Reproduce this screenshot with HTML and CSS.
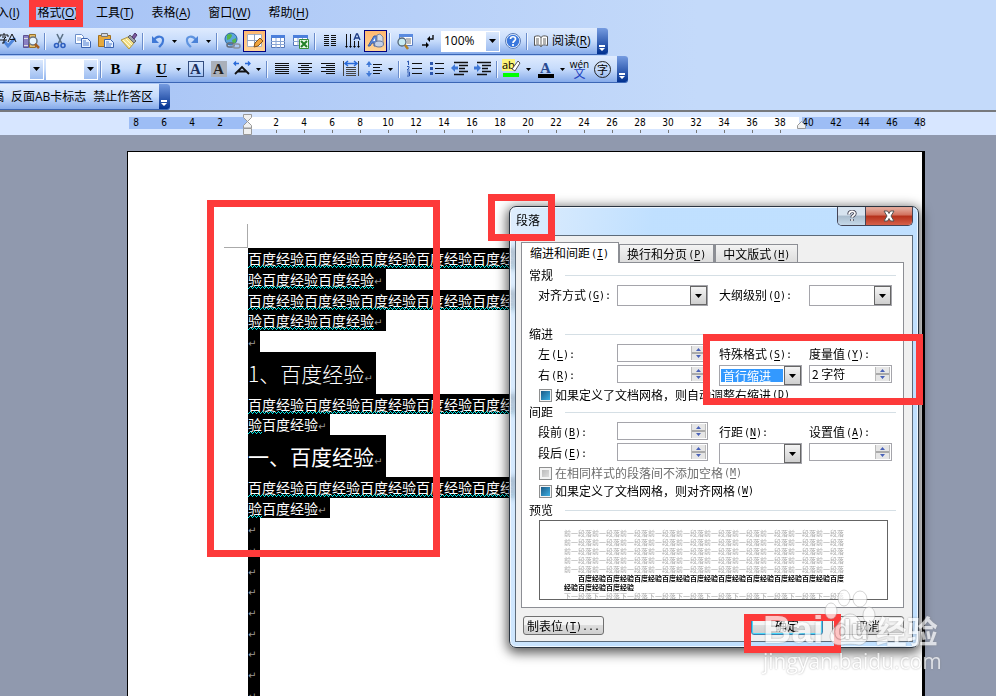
FILE: index.html
```html
<!DOCTYPE html>
<html lang="zh-CN">
<head>
<meta charset="utf-8">
<title>段落</title>
<link rel="stylesheet" href="styles.css">
</head>
<body>
<header class="chrome">
  <nav class="menu">
    <a href="#">插入(<u>I</u>)</a><a href="#">格式(<u>O</u>)</a><a href="#">工具(<u>T</u>)</a><a href="#">表格(<u>A</u>)</a><a href="#">窗口(<u>W</u>)</a><a href="#">帮助(<u>H</u>)</a>
  </nav>
  <div class="toolbar">
    <button class="tool" aria-label="拼写"><svg viewBox="0 0 18 18"><path d="M5 9l4 5 7-8" fill="none" stroke="#4f86dc" stroke-width="3"/><path d="M1 3h8M5 1v2M1 3v2M9 3v2M3 5h4L5 7v4H3M1 8h7" fill="none" stroke="#111"/><path d="M9 10l4-8 4 8M11 7.500h5" fill="none" stroke="#111"/></svg></button>
    <button class="tool" aria-label="信息检索"><svg viewBox="0 0 18 18"><path d="M1.500 3.500h5v12h-5z" fill="#8a80c4" stroke="#5d528f"/><path d="M2 6.500h4M2 13.500h4" stroke="#ddd"/><path d="M7.500 2.500h6v13h-6z" fill="#e8bf6a" stroke="#96702a"/><circle cx="11" cy="9" r="4" fill="#e6f3ff" stroke="#6a7480" stroke-width="1.500"/><path d="M13 12l4 4" stroke="#a45c22" stroke-width="2.500"/></svg></button>
    <i class="sep"></i>
    <button class="tool" aria-label="剪切"><svg viewBox="0 0 18 18"><path d="M6 2l5 10M12 2L7 12" stroke="#5c7186" stroke-width="1.600"/><circle cx="5.500" cy="13.500" r="2" fill="none" stroke="#2f5fbf" stroke-width="1.600"/><circle cx="12" cy="13.500" r="2" fill="none" stroke="#2f5fbf" stroke-width="1.600"/></svg></button>
    <button class="tool" aria-label="复制"><svg viewBox="0 0 18 18"><path d="M1.500 2.500h6l2 2v7h-8z" fill="#fff" stroke="#6c8fc8"/><path d="M3 6h4M3 8h4" stroke="#7aa0dc"/><path d="M7.500 6.500h6l3 3v6h-9z" fill="#e9f2ff" stroke="#3a63b0"/><path d="M9 9h3M9 11h6M9 13h6" stroke="#4f7ed0"/></svg></button>
    <button class="tool" aria-label="粘贴"><svg viewBox="0 0 18 18"><path d="M1.500 3.500h12v11h-12z" fill="#e7a93c" stroke="#a36f1c"/><path d="M4.500 1.500h6v3h-6z" fill="#d5d8de" stroke="#777"/><path d="M7.500 7.500h6l3 3v5h-9z" fill="#e9f2ff" stroke="#3a63b0"/><path d="M9 10h3M9 12h6M9 14h5" stroke="#4f7ed0"/></svg></button>
    <button class="tool" aria-label="格式刷"><svg viewBox="0 0 18 18"><path d="M1 8l7-3 6 6-5 6z" fill="#f3e08a" stroke="#b39a44"/><path d="M3 8l7 7M6 7l6 6" stroke="#fffbd8"/><path d="M8 5l2-2 6 6-2 2z" fill="#9aa0a8" stroke="#666"/><path d="M12 5l3-4 2 2-3 4z" fill="#7b5aa0" stroke="#50386e"/></svg></button>
    <i class="sep"></i>
    <button class="tool" aria-label="撤消"><svg viewBox="0 0 18 18"><path d="M5 8c3-5 10-4 9 1 0 3-2 4-4 6" fill="none" stroke="#3f78d6" stroke-width="2.200"/><path d="M3 4v7h7z" fill="#3f78d6"/></svg></button><button class="drop" aria-label="撤消列表"><svg viewBox="0 0 5 3"><path d="M0 0h5L2.500 3z"/></svg></button>
    <button class="tool" aria-label="恢复"><svg viewBox="0 0 18 18"><path d="M13 8C10 3 3 4 4 9c0 3 2 4 4 6" fill="none" stroke="#5f94e0" stroke-width="2.200"/><path d="M15 4v7H8z" fill="#4a82d8"/></svg></button><button class="drop" aria-label="恢复列表"><svg viewBox="0 0 5 3"><path d="M0 0h5L2.500 3z"/></svg></button>
    <i class="sep"></i>
    <button class="tool" aria-label="超链接"><svg viewBox="0 0 18 18"><circle cx="8" cy="7" r="6" fill="#5ba4dc" stroke="#28659e"/><path d="M4 3c3-2 5-1 5 1L7 7 4 8zM9 8l4-2v4l-3 2z" fill="#54b64c"/><rect x="4" y="11" width="7" height="4" rx="2" fill="none" stroke="#626b78" stroke-width="1.500"/><rect x="10" y="12" width="7" height="4" rx="2" fill="none" stroke="#8a929e" stroke-width="1.500"/></svg></button>
    <button class="tool on" aria-label="表格和边框"><svg viewBox="0 0 18 18"><path d="M1.500 2.500h14v12h-14z" fill="#fff" stroke="#a5b0c4"/><path d="M8.500 2v12M1 8.500h14" stroke="#8fa0bd"/><path d="M8 15l1-4 5-5 3 3-5 5z" fill="#f0a43c" stroke="#875319"/></svg></button>
    <button class="tool" aria-label="插入表格"><svg viewBox="0 0 18 18"><path d="M2.500 3.500h13v12h-13z" fill="#fff" stroke="#5577b8"/><path d="M2 3h14v3H2z" fill="#4b7fdb"/><path d="M2 9.500h14M2 12.500h14M7 6v10M11.500 6v10" stroke="#89a5d4"/></svg></button>
    <button class="tool" aria-label="插入Excel"><svg viewBox="0 0 18 18"><path d="M1.500 3.500h14v10h-14z" fill="#fff" stroke="#5577b8"/><path d="M1 3h15v3H1z" fill="#4b7fdb"/><path d="M1 9.500h14M6 6v8M10.500 6v8" stroke="#89a5d4"/><path d="M7.500 7.500h9v9h-9z" fill="#eaf7e8" stroke="#388c3c"/><path d="M9 9l6 6M15 9l-6 6" stroke="#238028" stroke-width="2"/></svg></button>
    <i class="sep"></i>
    <button class="tool" aria-label="分栏"><svg viewBox="0 0 18 18"><path d="M3 3.500h5M3 5.500h5M3 7.500h5M3 9.500h5M3 11.500h5M3 13.500h5M10 3.500h5M10 5.500h5M10 7.500h5M10 9.500h5M10 11.500h5M10 13.500h5" stroke="#111"/></svg></button>
    <button class="tool" aria-label="文字方向"><svg viewBox="0 0 18 18"><path d="M2.500 2v13M6.500 2v13M10.500 9v6M14.500 9v6" stroke="#111"/><path d="M1 14l1.500 2L4 14zM5 14l1.500 2L8 14zM9 14l1.500 2 1.500-2zM13 14l1.500 2 1.500-2z"/><path d="M10 8l2.500-6h1L16 8M11 6h4" fill="none" stroke="#1c3b84" stroke-width="1.300"/></svg></button>
    <button class="tool on" aria-label="绘图"><svg viewBox="0 0 18 18"><path d="M1 14L7 4h3v10H7v-3H5l-2 3z" fill="#5b87da" stroke="#3a5ca6"/><path d="M6 9h2V6z" fill="#fff"/><path d="M10 3l3-1 3 3v6l-3 3-3-3z" fill="#d5dae2" stroke="#8088a0"/><ellipse cx="12" cy="12" rx="4.500" ry="3" fill="#c2cfe8" stroke="#66769c"/></svg></button>
    <i class="sep"></i>
    <button class="tool" aria-label="文档结构图"><svg viewBox="0 0 18 18"><path d="M3.500 2.500h13v11h-13z" fill="#fff" stroke="#5b80c4"/><path d="M3 2h14v3H3z" fill="#5a8be0"/><path d="M10 7h5M11 9h4M11 11h4" stroke="#777"/><circle cx="6" cy="10" r="4" fill="#c9ecf4" stroke="#567" stroke-width="1.300"/><path d="M9 13l3 4" stroke="#b58124" stroke-width="2.500"/></svg></button>
    <button class="tool" aria-label="显示标记"><svg viewBox="0 0 18 18"><path d="M14 3v4H9M3 13h6" fill="none" stroke="#111" stroke-width="1.400"/><path d="M11 4v6L8 7zM7 10v6l3-3z"/></svg></button>
    <select class="combo zoomer" aria-label="显示比例"><option>100%</option></select>
    <button class="tool" aria-label="帮助"><svg viewBox="0 0 18 18"><circle cx="9" cy="9" r="7" fill="#3b78dd" stroke="#e9f2ff" stroke-width="1.500"/><circle cx="9" cy="9" r="7.500" fill="none" stroke="#5a7cb8"/><path d="M6.500 7c0-3 5-3 5 0 0 2-2.500 2-2.500 4M9 12v2" fill="none" stroke="#fff" stroke-width="1.700"/></svg></button>
    <i class="sep"></i>
    <button class="read"><svg viewBox="0 0 16 16"><path d="M1.500 3.500c3-1 5-1 6.500 1 1.500-2 3.500-2 6.500-1v9c-3-1-5-1-6.500 1-1.500-2-3.500-2-6.500-1z" fill="#fff" stroke="#555"/><path d="M8 4v10M3 6h3M3 8h3M3 10h3M10 6h3M10 8h3M10 10h3" stroke="#666"/></svg><span>阅读(<u>R</u>)</span></button>
    <button class="cap" aria-label="工具栏选项"><svg viewBox="0 0 7 7"><path d="M0 0h6v2H0zM0 3h6L3 6z"/></svg></button>
  </div>
  <div class="toolbar">
    <select class="combo style" aria-label="字体"><option></option></select>
    <select class="combo size" aria-label="字号"><option></option></select>
    <i class="sep"></i>
    <button class="tool glyph"><b>B</b></button><button class="tool glyph"><em>I</em></button><button class="tool glyph"><u>U</u></button><button class="drop" aria-label="下划线"><svg viewBox="0 0 5 3"><path d="M0 0h5L2.500 3z"/></svg></button>
    <button class="tool glyph"><span class="boxed">A</span></button><button class="tool glyph"><span class="shaded">A</span></button>
    <button class="tool" aria-label="字符缩放"><svg viewBox="0 0 18 18"><path d="M2 14l7-7 7 7M5 11.500h8" fill="none" stroke="#111" stroke-width="1.800"/><path d="M1 3.500h5M12 3.500h5M3 1.500l-2 2 2 2M15 1.500l2 2-2 2" fill="none" stroke="#2869d8" stroke-width="1.300"/></svg></button><button class="drop" aria-label="缩放"><svg viewBox="0 0 5 3"><path d="M0 0h5L2.500 3z"/></svg></button>
    <i class="sep"></i>
    <button class="tool" aria-label="两端对齐"><svg viewBox="0 0 18 18"><path d="M2 3.500h14M2 5.500h14M2 7.500h14M2 9.500h14M2 11.500h14M2 13.500h14" stroke="#111"/></svg></button>
    <button class="tool" aria-label="居中"><svg viewBox="0 0 18 18"><path d="M2 3.500h14M5 5.500h8M2 7.500h14M5 9.500h8M2 11.500h14M5 13.500h8" stroke="#111"/></svg></button>
    <button class="tool" aria-label="右对齐"><svg viewBox="0 0 18 18"><path d="M2 3.500h14M7 5.500h9M2 7.500h14M7 9.500h9M2 11.500h14M7 13.500h9" stroke="#111"/></svg></button>
    <button class="tool" aria-label="分散对齐"><svg viewBox="0 0 18 18"><path d="M1.500 1v15M16.500 1v15M4 7.500h10M4 9.500h10M4 11.500h10M4 13.500h10M4 15.500h10" stroke="#444"/><path d="M3 3.500h12M6 1L3 3.500 6 6M12 1l3 2.500L12 6" fill="none" stroke="#2869d8" stroke-width="1.500"/></svg></button>
    <button class="tool" aria-label="行距"><svg viewBox="0 0 18 18"><path d="M8 4.500h9M8 7.500h7M8 10.500h9M8 13.500h7" stroke="#111"/><path d="M4 3v4M4 11v4" stroke="#3f78d6" stroke-width="1.500"/><path d="M1 5l3-4 3 4zM1 13l3 4 3-4z" fill="#3f78d6"/></svg></button><button class="drop" aria-label="行距列表"><svg viewBox="0 0 5 3"><path d="M0 0h5L2.500 3z"/></svg></button>
    <i class="sep"></i>
    <button class="tool" aria-label="编号"><svg viewBox="0 0 18 18"><path d="M7 3.500h10M7 8.500h10M7 13.500h10" stroke="#111"/><path d="M2 2l1.500-1v4M2 6.500h2V8L2 10h2.500M2 12h2.500v4H2M2.500 14h2" fill="none" stroke="#2c56ae"/></svg></button>
    <button class="tool" aria-label="项目符号"><svg viewBox="0 0 18 18"><path d="M7 3.500h9M7 8.500h9M7 13.500h9" stroke="#111"/><path d="M2 2h3v3H2zM2 7h3v3H2zM2 12h3v3H2z" fill="#2c56ae"/></svg></button>
    <button class="tool" aria-label="减少缩进"><svg viewBox="0 0 18 18"><path d="M3 2.500h14M8 5.500h9M8 8.500h6M8 11.500h9M3 14.500h10" stroke="#111" stroke-width="1.600"/><path d="M0 8l4-4v2.500h3v3H4V12z" fill="#3f78d6"/></svg></button>
    <button class="tool" aria-label="增加缩进"><svg viewBox="0 0 18 18"><path d="M3 2.500h14M8 5.500h9M8 8.500h6M8 11.500h9M3 14.500h10" stroke="#111" stroke-width="1.600"/><path d="M7 8L3 4v2.500H0v3h3V12z" fill="#3f78d6"/></svg></button>
    <i class="sep"></i>
    <button class="tool glyph hl"><span class="ab">ab</span><svg viewBox="0 0 18 18"><path d="M9 9l6-8 2 2-5 8z" fill="#fff" stroke="#555"/><path d="M0 13h16v4H0z" fill="#0f0"/></svg></button><button class="drop" aria-label="突出显示"><svg viewBox="0 0 5 3"><path d="M0 0h5L2.500 3z"/></svg></button>
    <button class="tool glyph"><span class="inked">A</span></button><button class="drop" aria-label="字体颜色"><svg viewBox="0 0 5 3"><path d="M0 0h5L2.500 3z"/></svg></button>
    <button class="tool glyph pin"><span>wén</span><b>文</b></button>
    <button class="tool glyph"><span class="ring">字</span></button>
    <button class="cap" aria-label="工具栏选项"><svg viewBox="0 0 7 7"><path d="M0 0h6v2H0zM0 3h6L3 6z"/></svg></button>
  </div>
  <div class="toolbar words">
    <button>稿</button><button>反面AB卡标志</button><button>禁止作答区</button>
    <button class="cap" aria-label="工具栏选项"><svg viewBox="0 0 7 7"><path d="M0 0h6v2H0zM0 3h6L3 6z"/></svg></button>
  </div>
</header>
<div class="ruler">
  <span>8</span><span>6</span><span>4</span><span>2</span><span class="origin"><svg viewBox="0 0 9 21"><path d="M.5.500h8v3l-4 4-4-4zM.5 14V11.500l4-4 4 4V14zM.5 14.500h8v6h-8z" fill="#f0f0f0" stroke="#999"/></svg></span><span class="t">2</span><span class="t">4</span><span class="t">6</span><span class="t">8</span><span class="t">10</span><span class="t">12</span><span class="t">14</span><span class="t">16</span><span class="t">18</span><span class="t">20</span><span class="t">22</span><span class="t">24</span><span class="t">26</span><span class="t">28</span><span class="t">30</span><span class="t">32</span><span class="t">34</span><span class="t">36</span><span class="t">38</span><span class="limit">40<svg viewBox="0 0 9 8"><path d="M.5 7.500v-3l4-4 4 4v3z" fill="#f0f0f0" stroke="#999"/></svg></span><span>42</span><span>44</span><span>46</span><span>48</span>
</div>
<main class="desk">
  <article class="page">
    <div class="corner"></div>
    <p><span class="sel"><span class="wave">百度经验百度经验百度经验百度经验百度经验百度经验百度经验百度经验百度经验百度经</span></span></p>
    <p><span class="sel"><span class="wave">验百度经验百度经验</span><i>↵</i></span></p>
    <p><span class="sel"><span class="wave">百度经验百度经验百度经验百度经验百度经验百度经验百度经验百度经验百度经验百度经</span></span></p>
    <p><span class="sel"><span class="wave">验百度经验百度经验</span><i>↵</i></span></p>
    <p><span class="sel"><i>↵</i></span></p>
    <h2 class="thin"><span class="sel">1、百度经验<i>↵</i></span></h2>
    <p><span class="sel"><span class="wave">百度经验百度经验百度经验百度经验百度经验百度经验百度经验百度经验百度经验百度经</span></span></p>
    <p><span class="sel"><span class="wave">验</span>百度经验<i>↵</i></span></p>
    <h2><span class="sel">一、百度经验<i>↵</i></span></h2>
    <p><span class="sel"><span class="wave">百度经验百度经验百度经验百度经验百度经验百度经验百度经验百度经验百度经验百度经</span></span></p>
    <p><span class="sel"><span class="wave">验</span>百度经验<i>↵</i></span></p>
    <p><span class="sel"><i>↵</i></span></p><p><span class="sel"><i>↵</i></span></p><p><span class="sel"><i>↵</i></span></p>
    <p><span class="sel"><i>↵</i></span></p><p><span class="sel"><i>↵</i></span></p><p><span class="sel"><i>↵</i></span></p>
    <p><span class="sel"><i>↵</i></span></p><p><span class="sel"><i>↵</i></span></p><p><span class="sel"><i>↵</i></span></p>
  </article>
</main>

<section class="dialog" role="dialog" aria-labelledby="dlg-title">
  <div class="titlebar">
    <h1 id="dlg-title">段落</h1>
    <div class="winbtns"><button class="help" aria-label="帮助"><svg viewBox="0 0 12 12"><path d="M3 4.500c0-4 6-4 6-1 0 2-3 2-3 4M6 9v2" fill="none" stroke="#445" stroke-width="3.400"/><path d="M3 4.500c0-4 6-4 6-1 0 2-3 2-3 4M6 9v2" fill="none" stroke="#fff" stroke-width="1.600"/></svg></button><button class="close" aria-label="关闭"><svg viewBox="0 0 12 12"><path d="M1 1h3.500L6 3.500 7.500 1H11L8 6l3 5H7.500L6 8.500 4.500 11H1l3-5z" fill="#fff" stroke="#555"/></svg></button></div>
  </div>
  <form class="client">
    <div class="tabs"><button type="button" class="tab current">缩进和间距<kbd>(<u>I</u>)</kbd></button><button type="button" class="tab">换行和分页<kbd>(<u>P</u>)</kbd></button><button type="button" class="tab">中文版式<kbd>(<u>H</u>)</kbd></button></div>
    <div class="pane">
      <h3>常规</h3>
      <div class="fields">
        <label for="align">对齐方式<kbd>(<u>G</u>):</kbd></label><select id="align"><option></option></select>
        <label for="level">大纲级别<kbd>(<u>O</u>):</kbd></label><select id="level" class="last"><option></option></select>
      </div>
      <h3 class="apart">缩进</h3>
      <div class="fields">
        <label for="left">左<kbd>(<u>L</u>):</kbd></label><span class="spin"><input id="left"><i></i></span>
        <label for="special">特殊格式<kbd>(<u>S</u>):</kbd></label><label for="by" class="last">度量值<kbd>(<u>Y</u>):</kbd></label>
        <label for="right">右<kbd>(<u>R</u>):</kbd></label><span class="spin"><input id="right"><i></i></span>
        <select id="special" class="picked"><option>首行缩进</option></select><span class="spin last"><input id="by" value="2 字符"><i></i></span>
      </div>
      <label class="check"><input type="checkbox" class="mixed">如果定义了文档网格，则自动调整右缩进<kbd>(<u>D</u>)</kbd></label>
      <h3>间距</h3>
      <div class="fields">
        <label for="before">段前<kbd>(<u>B</u>):</kbd></label><span class="spin"><input id="before"><i></i></span>
        <label for="spacing">行距<kbd>(<u>N</u>):</kbd></label><label for="at" class="last">设置值<kbd>(<u>A</u>):</kbd></label>
        <label for="after">段后<kbd>(<u>E</u>):</kbd></label><span class="spin"><input id="after"><i></i></span>
        <select id="spacing"><option></option></select><span class="spin last"><input id="at"><i></i></span>
      </div>
      <label class="check off"><input type="checkbox" disabled>在相同样式的段落间不添加空格<kbd>(<u>M</u>)</kbd></label>
      <label class="check"><input type="checkbox" class="mixed">如果定义了文档网格，则对齐网格<kbd>(<u>W</u>)</kbd></label>
      <h3 class="near">预览</h3>
      <div class="preview">
        <p>前一段落前一段落前一段落前一段落前一段落前一段落前一段落前一段落前一段落前一段落</p>
        <p>前一段落前一段落前一段落前一段落前一段落前一段落前一段落前一段落前一段落前一段落</p>
        <p>前一段落前一段落前一段落前一段落前一段落前一段落前一段落前一段落前一段落前一段落</p>
        <p>前一段落前一段落前一段落前一段落前一段落前一段落前一段落前一段落前一段落前一段落</p>
        <p>前一段落前一段落前一段落前一段落前一段落前一段落前一段落前一段落前一段落前一段落</p>
        <p class="body">百度经验百度经验百度经验百度经验百度经验百度经验百度经验百度经验百度经验百度<br>经验百度经验百度经验</p>
        <p>下一段落下一段落下一段落下一段落下一段落下一段落下一段落下一段落下一段落下一段落</p>
      </div>
    </div>
    <div class="actions"><button type="button" class="tabstop">制表位<kbd>(<u>T</u>)...</kbd></button><button type="button" class="ok">确定</button><button type="button">取消</button></div>
  </form>
</section>

<div class="mark m-menu"></div>
<div class="mark m-text"></div>
<div class="mark m-title"></div>
<div class="mark m-special"></div>
<div class="mark m-ok"></div>

<div class="watermark">
  <div class="brand"><span>Bai</span><svg viewBox="0 0 52 58"><g fill="#fff" stroke="#999" stroke-opacity=".6"><ellipse cx="7" cy="22" rx="6" ry="8"/><ellipse cx="20" cy="9" rx="6" ry="8"/><ellipse cx="36" cy="10" rx="7" ry="8"/><ellipse cx="45" cy="26" rx="6" ry="8"/><path d="M26 25c8 0 9 7 14 12 7 7 4 19-5 19-6-1-12-1-18 0C7 57 2 47 10 39c7-6 8-14 16-14z"/></g></svg><span class="du">du</span><span class="cn">经验</span></div>
  <div class="site">jingyan.baidu.com</div>
</div>
</body>
</html>
```
FILE: styles.css
```css
* { box-sizing: border-box; }
body {
  margin: 0;
  height: 100vh;
  overflow: hidden;
  position: relative;
  display: flex;
  flex-direction: column;
  font: 12px/16px "Open Sans", "Noto Sans CJK SC", sans-serif;
  color: #000;
  background: #9099ae;
}
button, select, input { font: inherit; color: inherit; margin: 0; padding: 0; border: 0; background: none; border-radius: 0; outline: 0; }
p, h1, h2, h3 { margin: 0; font-weight: normal; }
u { text-underline-offset: 2px; }

/* menu and toolbars */
.chrome {
  flex: none;
  height: 112px;
  overflow: hidden;
  background: linear-gradient(90deg, #a4c1f5, #c4dafa 70%);
  border-bottom: 2px solid #77797d;
}
.menu { display: flex; gap: 18px; height: 28px; margin-left: -15px; padding-top: 5px; }
.menu a { color: #000; text-decoration: none; white-space: nowrap; }
.toolbar {
  display: flex;
  align-items: center;
  width: max-content;
  height: 27px;
  margin: 0 0 1px -4px;
  border-bottom: 1px solid #3b66b5;
  border-radius: 0 3px 3px 0;
  background: linear-gradient(#dfebfe, #c6dbfb 50%, #86abea);
}
.tool { width: 23px; height: 22px; display: grid; place-items: center; flex: none; }
.tool svg { width: 18px; height: 18px; }
.tool.on { background: linear-gradient(#ffb870, #ffd497); border: 1px solid #000080; }
.sep { width: 2px; height: 17px; margin: 0 2px; border-left: 1px solid #6a8ccb; border-right: 1px solid #f1f7ff; }
.drop { width: 11px; height: 22px; display: grid; place-items: center; }
.drop svg { width: 5px; height: 3px; }
.cap {
  width: 11px;
  align-self: stretch;
  margin-left: 3px;
  padding-bottom: 2px;
  display: flex;
  align-items: flex-end;
  justify-content: center;
  background: linear-gradient(#759be0, #3c66b8 50%, #00308f);
  border-radius: 0 3px 3px 0;
}
.cap svg { width: 7px; height: 7px; fill: #fff; }
.combo {
  appearance: none;
  height: 21px;
  border: 1px solid #fff;
  background:
    url("data:image/svg+xml,%3Csvg xmlns='http://www.w3.org/2000/svg' width='7' height='4'%3E%3Cpath d='M0 0h7L3.500 4z'/%3E%3C/svg%3E") right 3px center no-repeat,
    linear-gradient(#dce9fd, #9dbdf1) right / 13px 100% no-repeat,
    #fff;
}
.style { width: 48px; margin-right: 2px; }
.size { width: 52px; }
.zoomer { width: 59px; margin: 0 1px 0 2px; padding-left: 2px; }
.read { display: flex; align-items: center; gap: 3px; padding: 0 3px; }
.read svg { width: 16px; height: 16px; }
.words { gap: 7px; height: 26px; margin-left: -8px; }
.words .cap { margin-left: -1px; }

.glyph { font: bold 15px/18px "Liberation Serif", serif; }
.boxed, .shaded { width: 16px; height: 16px; line-height: 16px; color: #1c2f5c; }
.boxed { border: 1px solid #334d80; line-height: 14px; }
.shaded { background: #aab0ba; color: #222; }
.inked { width: 16px; height: 17px; line-height: 14px; color: #274a91; border-bottom: 4px solid #000; }
.hl { position: relative; }
.ab { position: absolute; left: 2px; top: 1px; font: 11px/12px "Open Sans", sans-serif; background: #fdf57a; }
.hl svg { position: relative; }
.pin { font: 12px/10px "Noto Sans CJK SC", sans-serif; align-content: center; }
.pin span { font: 10px/7px "Open Sans", sans-serif; }
.pin b { font-weight: normal; color: #2142c0; }
.ring { width: 17px; height: 17px; border: 1px solid #222; border-radius: 50%; font: 11px/14px "Noto Sans CJK SC", sans-serif; }

/* ruler */
.ruler {
  flex: none;
  display: flex;
  height: 23px;
  padding: 5px 0 0 122px;
  overflow: hidden;
  font: 10px/12px "DejaVu Sans Condensed", "DejaVu Sans", sans-serif;
  background:
    linear-gradient(90deg, #9dbdf5 118px, #fff 118px 670px, #d7e6ff 670px 673px, #9dbdf5 673px) 129px 5px / 792px 12px no-repeat,
    #d7e6ff;
}
.ruler span { width: 28px; flex: none; text-align: center; position: relative; }
.ruler .t { background: linear-gradient(#777, #777) center 13px / 1px 3px no-repeat; }
.origin svg { position: absolute; left: 9px; top: -3px; width: 9px; height: 21px; }
.limit svg { position: absolute; left: 3px; top: 4px; width: 9px; height: 8px; }

/* document */
.desk { flex: 1; min-height: 0; padding: 16px 71px 0 127px; overflow: hidden; }
.page {
  min-height: 100%;
  padding: 72px 0 0 120px;
  border: solid #000;
  border-width: 1px 3px 0 1px;
  background: #fff;
  font-family: "Noto Sans CJK SC", sans-serif;
  color: #fff;
  overflow: hidden;
}
.corner { width: 24px; height: 24px; margin-left: -24px; border: solid #aaa; border-width: 0 1px 1px 0; }
.page p { height: 21px; font-size: 14px; line-height: 21px; white-space: nowrap; }
.page p:nth-of-type(3n) { height: 20px; }
.page h2 { height: 42px; font-size: 21px; line-height: 42px; white-space: nowrap; }
.page .thin { font-weight: 300; }
.sel { display: inline-block; height: 100%; background: #000; vertical-align: top; }
.sel i { display: inline-block; width: 12px; font: 10px/12px "DejaVu Sans", sans-serif; color: #999; }
.wave {
  display: inline-block;
  height: 20px;
  background: url("data:image/svg+xml,%3Csvg xmlns='http://www.w3.org/2000/svg' width='4' height='3'%3E%3Cpath d='M0 2h1v1H0zM1 1h1v1H1zM2 0h1v1H2zM3 1h1v1H3z' fill='%230ee'/%3E%3C/svg%3E") left bottom repeat-x;
  vertical-align: top;
}

/* dialog */
.dialog {
  position: absolute;
  left: 509px;
  top: 206px;
  width: 410px;
  padding: 0 5px 5px;
  border: 1px solid #2a3440;
  border-radius: 7px;
  background: linear-gradient(100deg, rgba(215, 233, 252, .8), rgba(176, 216, 255, .8) 30%, rgba(176, 216, 255, .8));
  backdrop-filter: blur(3px);
  box-shadow: inset 0 0 0 1px rgba(255, 255, 255, .7), 0 3px 12px 2px rgba(0, 0, 0, .65);
  font-family: "Noto Sans CJK SC", sans-serif;
}
.titlebar { display: flex; justify-content: space-between; height: 28px; }
.titlebar h1 { font-size: 12px; line-height: 26px; padding-left: 1px; }
.winbtns { display: flex; height: 19px; border: 1px solid #445; border-top: 0; border-radius: 0 0 5px 5px; overflow: hidden; }
.winbtns button { display: grid; place-items: center; }
.winbtns svg { width: 12px; height: 12px; }
.help { width: 27px; background: linear-gradient(#d7e3ef 45%, #a9bccd 50%, #c5d8e8); }
.winbtns .close { width: 47px; border-left: 1px solid #445; background: linear-gradient(#e3a697 10%, #d1705c 45%, #b5301a 50%, #d6614a); }
.client { padding: 6px 8px 6px 5px; border: 1px solid #5d6b7a; background: #f0f0f0; }
kbd { margin-left: 1px; font: 10px/12px "DejaVu Sans Mono", monospace; vertical-align: 1px; }
.tabs { display: flex; align-items: flex-end; height: 20px; }
.tab { height: 18px; padding: 0 7px; border: 1px solid #8c8e94; border-bottom: 0; background: linear-gradient(#f3f3f3, #ddd); line-height: 16px; white-space: nowrap; }
.tab + .tab + .tab { border-left-width: 2px; }
.tab.current { height: 21px; margin-bottom: -1px; padding: 0 9px 0 8px; background: #fff; position: relative; line-height: 18px; }
.pane { padding: 4px 7px 7px; border: 1px solid #8c8e94; background: #fff; }
.pane h3 { display: flex; align-items: center; gap: 12px; height: 16px; margin-bottom: 2px; font-size: 12px; }
.pane h3::after { content: ""; flex: 1; height: 1px; background: #d5dfe5; }
.pane .apart { margin-top: 20px; }
.pane .near { margin-top: 2px; }
.fields { display: grid; grid-template-columns: 79px 102px 90px 83px; grid-auto-rows: 21px; margin-left: 9px; }
.fields label { white-space: nowrap; line-height: 20px; }
.pane select {
  appearance: none;
  width: 83px;
  height: 21px;
  padding-left: 3px;
  border: 1px solid #a5a5ab;
  line-height: 18px;
  background:
    url("data:image/svg+xml,%3Csvg xmlns='http://www.w3.org/2000/svg' width='7' height='4'%3E%3Cpath d='M0 0h7L3.500 4z'/%3E%3C/svg%3E") right 5px center no-repeat,
    linear-gradient(#f4f4f4, #cfcfcf) right 1px center / 15px 17px no-repeat,
    linear-gradient(#666, #666) right / 17px 19px no-repeat,
    #fff;
}
.pane #align { width: 91px; }
.pane .picked {
  color: #fff;
  background:
    url("data:image/svg+xml,%3Csvg xmlns='http://www.w3.org/2000/svg' width='7' height='4'%3E%3Cpath d='M0 0h7L3.500 4z'/%3E%3C/svg%3E") right 5px center no-repeat,
    linear-gradient(#f4f4f4, #cfcfcf) right 1px center / 15px 17px no-repeat,
    linear-gradient(#666, #666) right / 17px 19px no-repeat,
    linear-gradient(#39f, #39f) 1px 3px / 62px 13px no-repeat,
    #fff;
}
.spin { display: flex; width: 91px; height: 18px; border: 1px solid #a5a5ab; background: #fff; }
.spin.last { width: 83px; }
.spin input { flex: 1; min-width: 0; padding-left: 2px; }
.spin i {
  width: 15px;
  margin: 1px;
  background:
    url("data:image/svg+xml,%3Csvg xmlns='http://www.w3.org/2000/svg' width='15' height='14'%3E%3Cpath d='M0 6h15v2H0z' fill='%23aaa'/%3E%3Cpath d='M5 5h5L7.500 2zM5 9h5L7.500 12z' fill='%234a62b8'/%3E%3C/svg%3E") center no-repeat,
    #e6e6e6;
  border: solid #bbb;
  border-width: 0 1px;
}
.check { display: flex; align-items: center; height: 18px; margin-left: 10px; white-space: nowrap; }
.check input { appearance: none; width: 13px; height: 13px; margin-right: 3px; border: 1px solid #8e8f8f; background: linear-gradient(135deg, #bbb, #ddd) center / 7px 7px no-repeat, #f4f4f4; }
.check .mixed { background: linear-gradient(135deg, #1c5a86, #3cb0e4) center / 9px 9px no-repeat, #f4f4f4; }
.off { color: #6d6d6d; }
.preview { height: 80px; margin: 0 8px 0 10px; padding: 8px 24px 0; border: 1px solid #646464; overflow: hidden; }
.preview p { font-size: 7px; line-height: 9px; color: #aaa; white-space: nowrap; }
.preview .body { color: #000; font-weight: bold; text-indent: 14px; }
.actions { display: flex; gap: 9px; margin-top: 8px; padding-left: 2px; }
.actions button { width: 72px; height: 19px; border: 1px solid #707070; border-radius: 3px; background: linear-gradient(#f3f3f3 50%, #ddd 50%, #cfcfcf); line-height: 16px; white-space: nowrap; }
.actions .tabstop { width: 81px; margin-right: auto; }
.actions .ok { border-color: #3c7fb1; box-shadow: inset 0 0 0 1px #48d8fb; }

/* highlights */
.mark { position: absolute; border: 7px solid #fd3a3a; }
.m-menu { left: 29px; top: 0; width: 54px; height: 27px; }
.m-text { left: 207px; top: 200px; width: 233px; height: 357px; }
.m-title { left: 488px; top: 194px; width: 67px; height: 47px; }
.m-special { left: 703px; top: 334px; width: 220px; height: 71px; }
.m-ok { left: 744px; top: 614px; width: 97px; height: 39px; }

.watermark { position: absolute; left: 763px; top: 588px; color: #fff; opacity: .7; text-shadow: 0 0 2px #888; }
.brand { display: flex; align-items: flex-end; height: 61px; position: relative; font: bold 39px/38px "Liberation Sans", sans-serif; }
.brand svg { width: 52px; height: 58px; margin-bottom: 2px; }
.brand .du { position: absolute; left: 71px; bottom: 3px; font-size: 28px; line-height: 32px; text-shadow: 0 0 2px #666, 0 0 2px #888; }
.brand .cn { font: bold 31px/38px "Noto Sans CJK SC", sans-serif; }
.site { font: 21px/24px "Open Sans", sans-serif; }
```
